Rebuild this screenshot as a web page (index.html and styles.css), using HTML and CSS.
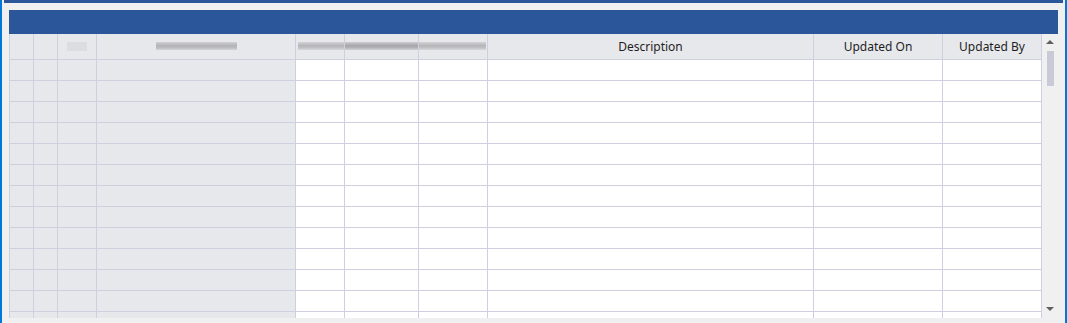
FILE: index.html
```html
<!DOCTYPE html>
<html>
<head>
<meta charset="utf-8">
<link rel="stylesheet" href="styles.css">
</head>
<body>
<div class="window">
  <div class="topbar"></div>
  <div class="panel">
    <div class="caption"></div>
    <div class="gridwrap">
      <div class="grid">
        <div class="hc gray"></div>
        <div class="hc gray"></div>
        <div class="hc gray"><span class="ph ph-box"></span></div>
        <div class="hc gray"><span class="ph ph-name"></span></div>
        <div class="hc"><span class="ph ph-a"></span></div>
        <div class="hc"><span class="ph ph-b"></span></div>
        <div class="hc"><span class="ph ph-c"></span></div>
        <div class="hc">Description</div>
        <div class="hc">Updated On</div>
        <div class="hc">Updated By</div>
      </div>
      <div class="grid body" id="rows"></div>
      <div class="scrollbar">
        <span class="arrow up"></span>
        <span class="thumb"></span>
        <span class="spacer"></span>
        <span class="arrow down"></span>
      </div>
    </div>
  </div>
</div>
<script>
  var rows = document.getElementById('rows');
  var html = '';
  for (var r = 0; r < 13; r++) {
    for (var c = 0; c < 10; c++) {
      html += '<div class="cell' + (c < 4 ? ' gray' : '') + '"></div>';
    }
  }
  rows.innerHTML = html;
</script>
</body>
</html>
```

FILE: styles.css
```css
html, body {
  margin: 0;
  padding: 0;
}
body {
  background: #f0f0f0;
  font-family: "Noto Sans", "Open Sans", sans-serif;
  font-size: 12px;
  color: #1e1e1e;
  width: 1067px;
  height: 323px;
  overflow: hidden;
}
.window {
  box-sizing: border-box;
  height: 323px;
  border-left: 2px solid #0078d7;
  border-right: 2px solid #0078d7;
  overflow: hidden;
}
.topbar {
  height: 3px;
  margin: 0 2px;
  background: #2b579a;
}
.panel {
  margin: 7px 7px 0 7px;
}
.caption {
  height: 24px;
  background: #2b579a;
}
.gridwrap {
  position: relative;
  height: 284px;
  overflow: hidden;
  display: grid;
  grid-template-columns: 1033px 16px;
  grid-template-rows: 26px 1fr;
}
.grid {
  grid-column: 1;
  display: grid;
  grid-template-columns: 24px 24px 39px 199px 49px 74px 69px 326px 129px 99px;
  border-left: 1px solid #d0cfe0;
}
.grid.body {
  grid-auto-rows: 21px;
  overflow: hidden;
}
.hc, .cell {
  box-sizing: border-box;
  border-right: 1px solid #d0cfe0;
  border-bottom: 1px solid #d0cfe0;
  background: #ffffff;
}
.hc {
  height: 26px;
  background: #e7e8ec;
  display: flex;
  align-items: center;
  justify-content: center;
  padding-bottom: 1px;
  white-space: nowrap;
}
.gray {
  background: #e7e8ec;
}
.ph {
  display: block;
  height: 9px;
  filter: blur(0.6px);
}
.ph-box {
  width: 20px;
  height: 9px;
  background: #dcdde1;
}
.ph-name {
  width: 81px;
  height: 8px;
  background: linear-gradient(#d0d0d2, #b4b4b6 45%, #bcbcbe 70%, #d4d4d6);
}
.ph-a, .ph-b, .ph-c {
  height: 8px;
  background: linear-gradient(#d4d4d6, #b6b6b8 45%, #c0c0c2 70%, #d8d8da);
}
.ph-a {
  width: 46px;
  margin-left: 2px;
  margin-right: -1px;
}
.hc:has(.ph-a), .hc:has(.ph-b), .hc:has(.ph-c) {
  justify-content: flex-start;
}
.ph-b {
  width: 73px;
  background: linear-gradient(#cdcdcf, #a8a8aa 45%, #b2b2b4 70%, #d2d2d4);
}
.ph-c {
  width: 67px;
}
.scrollbar {
  grid-column: 2;
  grid-row: 1 / 3;
  background: #f0f0f0;
  display: flex;
  flex-direction: column;
  align-items: center;
  padding: 6px 0 7px 0;
}
.arrow {
  width: 0;
  height: 0;
  border-left: 4px solid transparent;
  border-right: 4px solid transparent;
}
.arrow.up {
  border-bottom: 4px solid #606060;
}
.arrow.down {
  border-top: 4px solid #606060;
}
.thumb {
  width: 7px;
  height: 35px;
  margin-top: 7px;
  background: #c9cad8;
}
.spacer {
  flex: 1;
}
```
